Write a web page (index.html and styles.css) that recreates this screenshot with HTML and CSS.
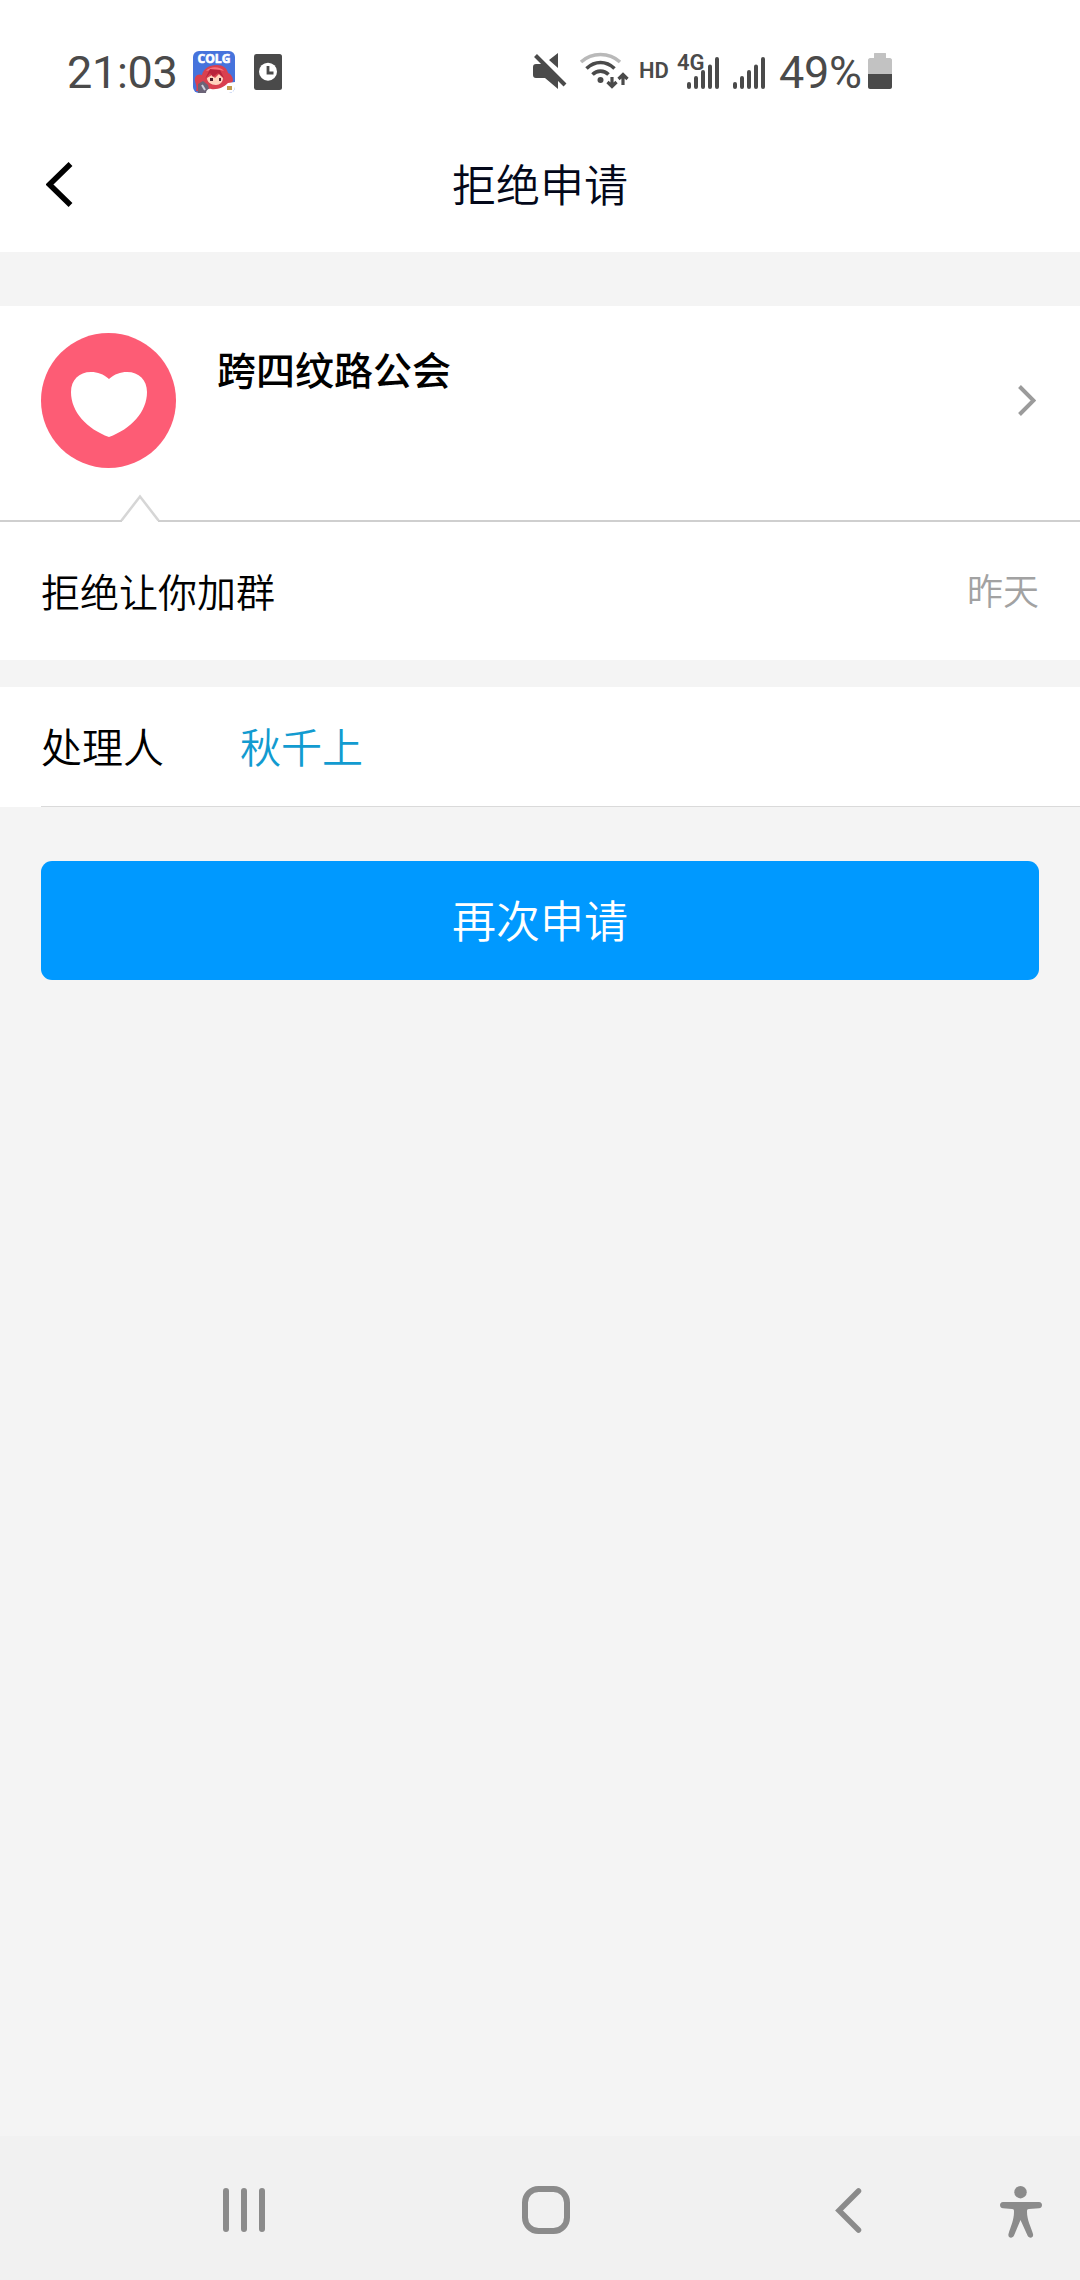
FILE: index.html
```html
<!DOCTYPE html>
<html lang="zh-CN">
<head>
  <meta charset="UTF-8">
  <meta name="viewport" content="width=device-width, initial-scale=1.0">
  <title>拒绝申请</title>
  <link rel="stylesheet" href="styles.css">
</head>
<body>
  <div class="screen">
    <div class="status-bar">
      <div class="status-left">
        <span class="time">21:03</span>
        <svg class="app-icon" width="42" height="42" viewBox="0 0 42 42">
          <defs><clipPath id="appClip"><rect width="42" height="42" rx="6"/></clipPath></defs>
          <g clip-path="url(#appClip)">
            <rect width="42" height="42" fill="#4673dc"/>
            <path d="M3 40C5 35 1 31 2 27c1-4 5-4 7-3 1-6 7-10 15-10 6 0 10 3 11 8 3 1 5 4 5 8l-4 5-8 3-16 3z" fill="#d9404f"/>
            <path d="M13 20c4-5 14-5 18 0-6-2-12-1-18 0z" fill="#f8737d"/>
            <path d="M14 27l5-3 3 3 4-4 4 4c0 4-3 7-7 7-5 0-9-3-9-7z" fill="#ffd3bd"/>
            <path d="M12 28l5-6 3 4 5-4 6 5-4-8-10-1z" fill="#b9233c"/>
            <path d="M17 27h3v3h-3zM26 27h2v3h-2z" fill="#4b1c2b"/>
            <path d="M5 33l5-3 5 4 2 8H5z" fill="#6b6377"/>
            <path d="M13 42c0-3 3-5 5-4 7 1 13-2 17-6l7-1v11z" fill="#fff"/>
            <path d="M34 35h5v4h-5z" fill="#c39b4b"/>
            <path d="M9 34l3 5" stroke="#cfd0dc" stroke-width="2"/>
          </g>
          <text class="app-label" x="21" y="11.500" text-anchor="middle" textLength="33" lengthAdjust="spacingAndGlyphs">COLG</text>
        </svg>
        <svg class="clock-icon" width="28" height="36" viewBox="0 0 28 36">
          <rect width="28" height="36" rx="2.5" fill="#4a4a4a"/>
          <circle cx="14" cy="17.7" r="9" fill="#fff"/>
          <path d="M14 12v7h5.5" fill="none" stroke="#4a4a4a" stroke-width="2.8"/>
        </svg>
      </div>
      <div class="status-right">
        <svg class="mute-icon" width="34" height="36" viewBox="0 0 34 36">
          <path d="M0 14c0-2 1-3 3-3h6l16 16v9L12 25H3c-2 0-3-1-3-3zM16 7l9-7v15z" fill="#4a4a4a"/>
          <path d="M2.500 2.500L32 32" stroke="#4a4a4a" stroke-width="4"/>
        </svg>
        <svg class="wifi-icon" width="48" height="36" viewBox="0 0 48 36">
          <g fill="none" stroke="#4a4a4a" stroke-width="3.6">
            <path d="M1 9C12-1 29-1 40 9" stroke="#b9b9b9"/>
            <path d="M6.500 15.500C15 7.500 26 7.500 34.500 15.500"/>
            <path d="M12.500 21.500C17 17 24 17 28.500 21.500"/>
          </g>
          <circle cx="20.500" cy="27" r="3" fill="#4a4a4a"/>
          <path d="M32 24v10M27.500 29l4.500 4.500 4.500-4.500M43 32V21M38.500 26l4.500-4.500 4.500 4.500" fill="none" stroke="#4a4a4a" stroke-width="3.200"/>
        </svg>
        <span class="hd">HD</span>
        <div class="mobile">
          <svg width="32" height="36" viewBox="0 0 32 36">
            <path d="M2 31v3M9 25v9M16 19v15M23 13.500v20.500M30 6v28" stroke="#4a4a4a" stroke-width="4" stroke-linecap="round"/>
          </svg>
          <span class="net-type">4G</span>
        </div>
        <svg class="signal" width="32" height="36" viewBox="0 0 32 36">
          <path d="M2 31v3M9 25v9M16 19v15M23 13.500v20.500M30 6v28" stroke="#4a4a4a" stroke-width="4" stroke-linecap="round"/>
        </svg>
        <span class="battery-text">49%</span>
        <svg class="battery" width="24" height="36" viewBox="0 0 24 36">
          <path d="M7 0h10c1 0 1 .5 1 1v4h4c1 0 2 1 2 2v14H0V7c0-1 1-2 2-2h4V1c0-.5 0-1 1-1z" fill="#c2c2c2"/>
          <path d="M0 21h24v13c0 1-1 2-2 2H2c-1 0-2-1-2-2z" fill="#4a4a4a"/>
        </svg>
      </div>
    </div>

    <div class="header">
      <svg class="back" width="27" height="45" viewBox="0 0 27 45">
        <path d="M24.500 2L3.500 22.500l21 20.500" fill="none" stroke="#000" stroke-width="5.500"/>
      </svg>
      <div class="title">拒绝申请</div>
    </div>

    <div class="group">
      <svg class="avatar" width="135" height="135" viewBox="0 0 135 135">
        <circle cx="67.500" cy="67.500" r="67.500" fill="#fd5c75"/>
        <path d="M68 46C62 41 57 39 50 39 38 39 30 47 30 59c0 20 16 37 38 45 22-8 38-25 38-45 0-12-8-20-20-20-7 0-12 2-18 7z" fill="#fff"/>
      </svg>
      <div class="group-name">跨四纹路公会</div>
      <svg class="arrow" width="18" height="31" viewBox="0 0 18 31">
        <path d="M1.500 1.500L15.500 15.500l-14 14" fill="none" stroke="#9b9b9b" stroke-width="4"/>
      </svg>
      <svg class="notch" width="40" height="28" viewBox="0 0 40 28">
        <path d="M2 26L20 2l18 24v2H2z" fill="#fff"/>
        <path d="M1.500 26.500L20 2.500l18.500 24" fill="none" stroke="#d6d6d6" stroke-width="2.500"/>
      </svg>
    </div>
    <div class="message">
      <span>拒绝让你加群</span>
      <span class="date">昨天</span>
    </div>

    <div class="handler">
      <span class="handler-label">处理人</span>
      <a class="handler-name">秋千上</a>
    </div>

    <button class="btn">再次申请</button>

    <div class="nav-bar">
      <svg class="nav-recent" width="42" height="44" viewBox="0 0 42 44">
        <path d="M3 3v38M21 3v38M39 3v38" stroke="#8b8b8b" stroke-width="6" stroke-linecap="round"/>
      </svg>
      <svg class="nav-home" width="48" height="48" viewBox="0 0 48 48">
        <rect x="3" y="3" width="42" height="42" rx="13.500" fill="none" stroke="#8b8b8b" stroke-width="6"/>
      </svg>
      <svg class="nav-back" width="27" height="45" viewBox="0 0 27 45">
        <path d="M23.500 3L4 22.500 23.500 42" fill="none" stroke="#8b8b8b" stroke-width="5.500" stroke-linecap="round"/>
      </svg>
      <svg class="nav-access" width="42" height="52" viewBox="0 0 42 52">
        <circle cx="20.500" cy="6.200" r="6.200" fill="#8b8b8b"/>
        <path d="M3 16h36c4 0 4 6 0 6.300l-10 .7c-2 0-2 1-2 3 0 8 4 15 6 22 1 4-4 5-5.500 1.500L20.500 34 14 49.500c-1.500 3.500-6.500 2.500-5.500-1.500 2-7 5.500-14 5.500-22 0-2 0-3-2-3L3 22.300c-4-.3-4-6.300 0-6.300z" fill="#8b8b8b"/>
      </svg>
    </div>
  </div>
</body>
</html>
```
FILE: styles.css
```css
* {
  box-sizing: border-box;
}

body {
  margin: 0;
  font-family: "Noto Sans CJK SC", sans-serif;
  font-weight: 350;
  color: #000;
}

svg {
  display: block;
  flex: none;
}

.screen {
  display: flex;
  flex-direction: column;
  width: 1080px;
  height: 2280px;
  background-color: #f4f4f4;
}

.status-bar {
  display: flex;
  justify-content: space-between;
  align-items: center;
  height: 117px;
  padding: 27px 188px 0 67px;
  background-color: #fff;
  font-family: Roboto, sans-serif;
  font-weight: 400;
  color: #4a4a4a;
}

.status-left,
.status-right {
  display: flex;
  align-items: center;
  height: 90px;
}

.time,
.battery-text {
  padding-top: 2px;
  font-size: 45px;
  line-height: 54px;
  letter-spacing: -0.3px;
}

.time {
  width: 126px;
}

.app-icon {
  overflow: visible;
}

.clock-icon {
  margin-left: 19px;
}

.app-label {
  font-family: "Open Sans", sans-serif;
  font-size: 12px;
  font-weight: 700;
  fill: #fff;
  stroke: #fff;
  stroke-width: 0.6px;
}

.mute-icon,
.wifi-icon,
.battery,
.signal,
.mobile {
  margin-top: -2px;
}

.wifi-icon {
  margin-left: 13px;
  overflow: visible;
}

.hd {
  width: 47px;
  padding-left: 11px;
  font-size: 22px;
  font-weight: 600;
  line-height: 26px;
  margin-top: -2px;
}

.mobile {
  position: relative;
  margin-left: 12px;
}

.net-type {
  position: absolute;
  left: -10px;
  top: -3px;
  font-size: 22px;
  font-weight: 600;
  line-height: 26px;
}

.signal {
  margin-left: 14px;
}

.battery-text {
  width: 89px;
  margin-left: 14px;
}

.header {
  display: flex;
  align-items: center;
  height: 135px;
  padding: 0 46px;
  background-color: #fff;
}

.title {
  flex: 1;
  padding: 0 27px 3px 0;
  text-align: center;
  font-size: 44px;
  line-height: 60px;
  color: #03081a;
}

.group {
  position: relative;
  display: flex;
  align-items: flex-start;
  height: 216px;
  margin-top: 54px;
  padding: 27px 44px 0 41px;
  background-color: #fff;
  border-bottom: 2px solid #cfcfcf;
}

.group-name {
  flex: 1;
  margin-left: 41px;
  padding-top: 6px;
  font-size: 39px;
  font-weight: 500;
  line-height: 58px;
}

.arrow {
  margin-top: 52px;
}

.notch {
  position: absolute;
  left: 120px;
  bottom: -2px;
}

.message {
  display: flex;
  justify-content: space-between;
  align-items: center;
  height: 138px;
  padding: 0 41px 2px;
  background-color: #fff;
  font-size: 39px;
  line-height: 58px;
}

.date {
  padding-bottom: 3px;
  font-size: 36px;
  color: #a2a2a2;
}

.handler {
  display: flex;
  align-items: center;
  height: 120px;
  margin-top: 27px;
  padding: 0 0 4px 41px;
  background: linear-gradient(#dadada, #dadada) 41px 100% / 100% 1px no-repeat #fff;
  font-size: 41px;
  line-height: 60px;
}

.handler-label {
  width: 199px;
}

.handler-name {
  color: #129bd0;
}

.btn {
  height: 119px;
  margin: 54px 41px 0;
  padding: 0 0 3px;
  border: none;
  border-radius: 11px;
  background-color: #0099ff;
  font-family: inherit;
  font-size: 44px;
  font-weight: inherit;
  color: #fff;
  cursor: pointer;
}

.nav-bar {
  display: flex;
  align-items: center;
  height: 144px;
  margin-top: auto;
  padding: 4px 0 0 223px;
  background-color: #f1f1f1;
}

.nav-home {
  margin-left: 257px;
}

.nav-back {
  margin-left: 265px;
}

.nav-access {
  margin: 3px 0 0 138px;
}
```
